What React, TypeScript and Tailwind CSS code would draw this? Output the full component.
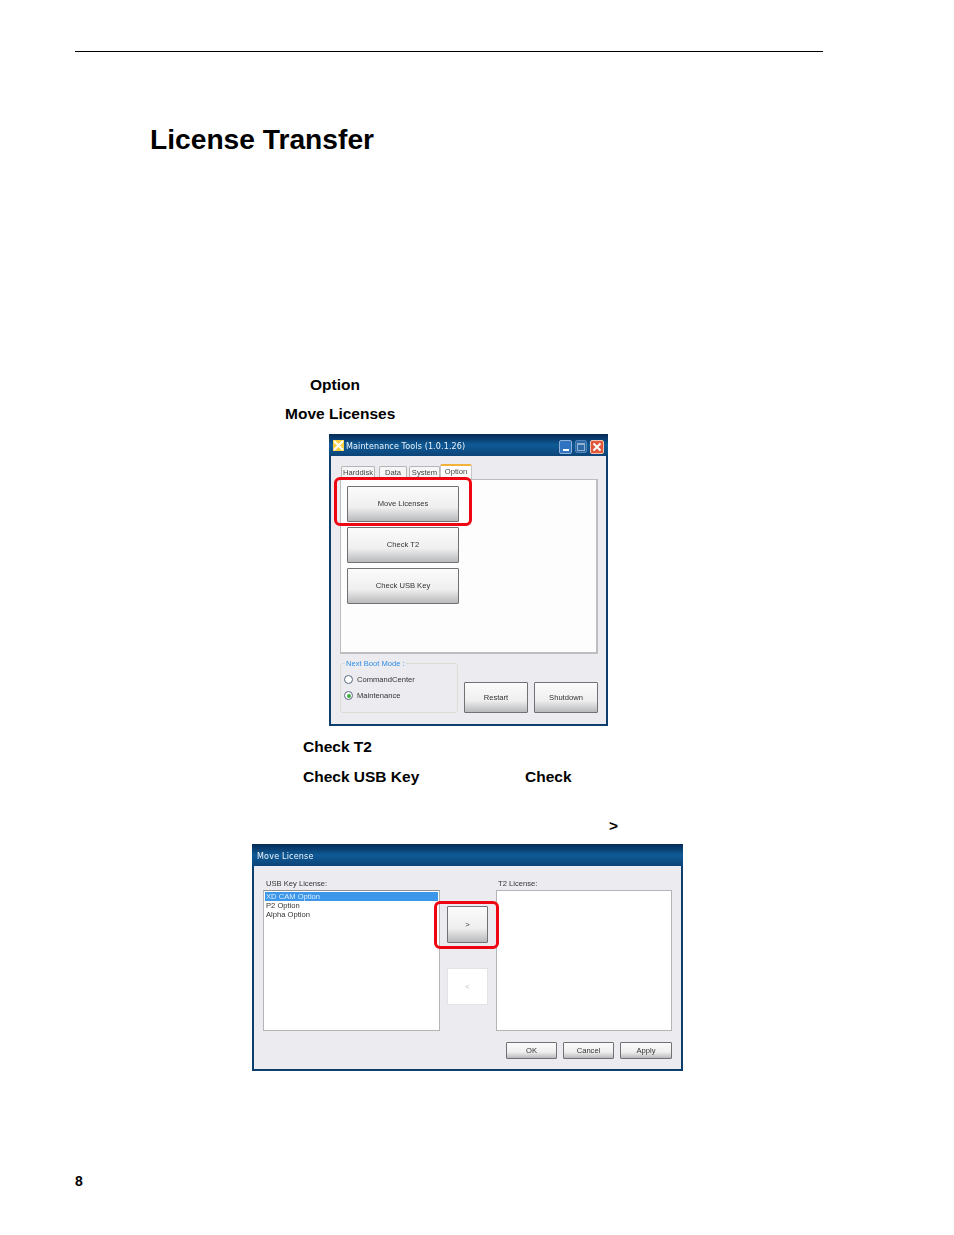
import React from 'react';

const XpButton: React.FC<{ className?: string; children: React.ReactNode }> = ({ className = '', children }) => (
  <div
    className={`flex items-center justify-center shrink-0 border border-[#6f7174] rounded-[1px] bg-gradient-to-b from-[#fbfbfb] via-[#efefef] via-60% to-[#b9babc] text-[7.6px] leading-none text-[#333] ${className}`}
  >
    {children}
  </div>
);

const Tab: React.FC<{ label: string; active?: boolean; className: string }> = ({ label, active, className }) => (
  <div
    className={`flex justify-center rounded-t-[2px] border border-b-0 text-[7.6px] leading-none text-[#444] ${
      active
        ? 'h-[15px] pt-[2px] border-[#c5c5c5] border-t-2 border-t-[#f2b23c] bg-white'
        : 'h-[13px] pt-[2px] border-[#b5b5b5] bg-[#f6f6f6]'
    } ${className}`}
  >
    {label}
  </div>
);

const Highlight: React.FC<{ className: string }> = ({ className }) => (
  <div className={`absolute border-[3px] border-[#ee0612] rounded-[6px] ${className}`} />
);

const Radio: React.FC<{ label: string; checked?: boolean }> = ({ label, checked }) => (
  <div className="flex items-center gap-[4px] h-[9px]">
    <div className="w-[9px] h-[9px] rounded-full border border-[#566a80] bg-white flex items-center justify-center">
      {checked && <div className="w-[4px] h-[4px] rounded-full bg-[#3fae3f]" />}
    </div>
    <span className="text-[7.6px] leading-none text-[#333]">{label}</span>
  </div>
);

const MaintenanceWindow: React.FC = () => (
  <div className="relative ml-[329px] w-[279px] h-[292px] border-[2px] border-t-0 border-[#0c3f6e] bg-[#ecebef] [filter:blur(0.25px)]">
    {/* title bar */}
    <div className="-mx-[2px] h-[22px] flex items-center pt-[3px] pl-[4px] pr-[4px] bg-gradient-to-b from-[#062a55] via-[#0f5a96] to-[#0c4478]">
      <svg width="11" height="11" viewBox="0 0 11 11" className="shrink-0 -mt-[2px]">
        <rect width="11" height="11" fill="#f7d23e" />
        <path d="M1 1 L10 10 M10 1 L1 10" stroke="#fff" strokeWidth="2" />
      </svg>
      <span className="ml-[2px] text-[8px] leading-none tracking-[0.13px] text-[#eef3f9] [font-family:'DejaVu_Sans',sans-serif]">
        Maintenance Tools (1.0.1.26)
      </span>
      <div className="ml-auto flex items-center gap-[3px]">
        <div className="w-[13px] h-[14px] rounded-[2px] bg-[#2f74c0] border border-[#8fb0d8] flex items-end justify-center pb-[2px]">
          <div className="w-[6px] h-[2px] bg-white" />
        </div>
        <div className="w-[12px] h-[13px] rounded-[2px] bg-[#2d6aa5] border border-[#4f83b8] flex items-center justify-center">
          <div className="w-[8px] h-[8px] border border-[#8fb0d0] border-t-2" />
        </div>
        <div className="w-[14px] h-[14px] rounded-[2px] bg-[#e0593a] border border-[#f3c1b0] flex items-center justify-center">
          <svg width="10" height="10" viewBox="0 0 10 10">
            <path d="M1.5 1.5 L8.5 8.5 M8.5 1.5 L1.5 8.5" stroke="#fff" strokeWidth="2" />
          </svg>
        </div>
      </div>
    </div>
    {/* tabs */}
    <div className="ml-[10px] mt-[8px] h-[15px] flex items-end">
      <Tab label="Harddisk" className="w-[34px]" />
      <Tab label="Data" className="ml-[4px] w-[28px]" />
      <Tab label="System" className="ml-[2px] w-[31px]" />
      <Tab label="Option" active className="w-[32px]" />
    </div>
    {/* option panel */}
    <div className="ml-[9px] w-[258px] h-[175px] border border-[#bdbdbd] border-b-2 border-r-2 bg-[#fdfdfd] pt-[6px] pl-[6px] flex flex-col gap-[5px]">
      <XpButton className="w-[112px] h-[36px]">Move Licenses</XpButton>
      <XpButton className="w-[112px] h-[36px]">Check T2</XpButton>
      <XpButton className="w-[112px] h-[36px]">Check USB Key</XpButton>
    </div>
    {/* boot mode and power buttons */}
    <div className="ml-[9px] mt-[9px] flex items-end">
      <div className="relative w-[118px] h-[50px] border border-[#dcdcd6] rounded-[3px] pl-[3px] pt-[11px] flex flex-col gap-[7px]">
        <span className="absolute -top-[4px] left-[4px] px-[1px] bg-[#ecebef] text-[7.6px] leading-none text-[#2f8fe6]">
          Next Boot Mode :
        </span>
        <Radio label="CommandCenter" />
        <Radio label="Maintenance" checked />
      </div>
      <XpButton className="ml-[6px] w-[64px] h-[31px]">Restart</XpButton>
      <XpButton className="ml-[6px] w-[64px] h-[31px]">Shutdown</XpButton>
    </div>
    <Highlight className="left-[3px] top-[43px] w-[138px] h-[49px]" />
  </div>
);

const MoveLicenseWindow: React.FC = () => (
  <div className="relative ml-[252px] w-[431px] h-[227px] border-[2px] border-t-0 border-[#0c3f6e] bg-[#ecebef] [filter:blur(0.25px)]">
    <div className="-mx-[2px] h-[22px] flex items-center pt-[3px] pl-[5px] bg-gradient-to-b from-[#062a55] via-[#0f5a96] to-[#0c4478]">
      <span className="text-[8px] leading-none tracking-[0.2px] text-[#eef3f9] [font-family:'DejaVu_Sans',sans-serif]">
        Move License
      </span>
    </div>
    <div className="mt-[12px] ml-[9px] flex">
      <div className="w-[177px] shrink-0">
        <div className="h-[12px] pt-[2px] pl-[3px] text-[7.6px] leading-none text-[#333]">USB Key License:</div>
        <div className="h-[141px] border border-[#b5b5b5] border-t-[#8f8f8f] bg-white pt-[1px] px-[1px] text-[7.6px] leading-[9px] text-[#333]">
          <div className="bg-[#3c97ea] text-[#dcecff] pl-[1px] h-[9px]">XD CAM Option</div>
          <div className="pl-[1px]">P2 Option</div>
          <div className="pl-[1px]">Alpha Option</div>
        </div>
      </div>
      <div className="ml-[7px] w-[42px] shrink-0 pt-[28px] flex flex-col gap-[25px]">
        <XpButton className="w-[41px] h-[37px]">&gt;</XpButton>
        <div className="w-[41px] h-[37px] border border-[#e3e3e3] bg-white flex items-center justify-center text-[7.6px] text-[#bbb]">
          &lt;
        </div>
      </div>
      <div className="ml-[7px] w-[176px] shrink-0">
        <div className="h-[12px] pt-[2px] pl-[2px] text-[7.6px] leading-none text-[#333]">T2 License:</div>
        <div className="h-[141px] border border-[#b5b5b5] bg-white" />
      </div>
    </div>
    <div className="mt-[11px] ml-[252px] flex gap-[6px]">
      <XpButton className="w-[51px] h-[17px]">OK</XpButton>
      <XpButton className="w-[51px] h-[17px]">Cancel</XpButton>
      <XpButton className="w-[52px] h-[17px]">Apply</XpButton>
    </div>
    <Highlight className="left-[180px] top-[57px] w-[65px] h-[48px]" />
  </div>
);

const App: React.FC = () => {
  return (
    <div className="w-[954px] h-[1235px] bg-white text-black font-['Liberation_Sans',Arial,sans-serif] overflow-hidden">
      <div className="pt-[51px]">
        <div className="ml-[75px] w-[748px] h-px bg-black" />
      </div>
      <h1 className="mt-[70px] ml-[150px] text-[28.2px] leading-[34px] font-bold">License Transfer</h1>

      <p className="mt-[219px] ml-[310px] text-[15.5px] leading-[20px] font-bold">Option</p>
      <p className="mt-[9px] ml-[285px] text-[15.5px] leading-[20px] font-bold">Move Licenses</p>

      <div className="mt-[10px]">
        <MaintenanceWindow />
      </div>

      <p className="mt-[11px] ml-[303px] text-[15.5px] leading-[20px] font-bold">Check T2</p>
      <div className="mt-[10px] ml-[303px] flex text-[15.5px] leading-[20px] font-bold">
        <span className="w-[222px]">Check USB Key</span>
        <span>Check</span>
      </div>
      <p className="mt-[29px] ml-[609px] text-[15.5px] leading-[20px] font-bold">&gt;</p>

      <div className="mt-[8px]">
        <MoveLicenseWindow />
      </div>

      <p className="mt-[101px] ml-[75px] text-[14px] leading-[18px] font-bold">8</p>
    </div>
  );
};

export default App;
